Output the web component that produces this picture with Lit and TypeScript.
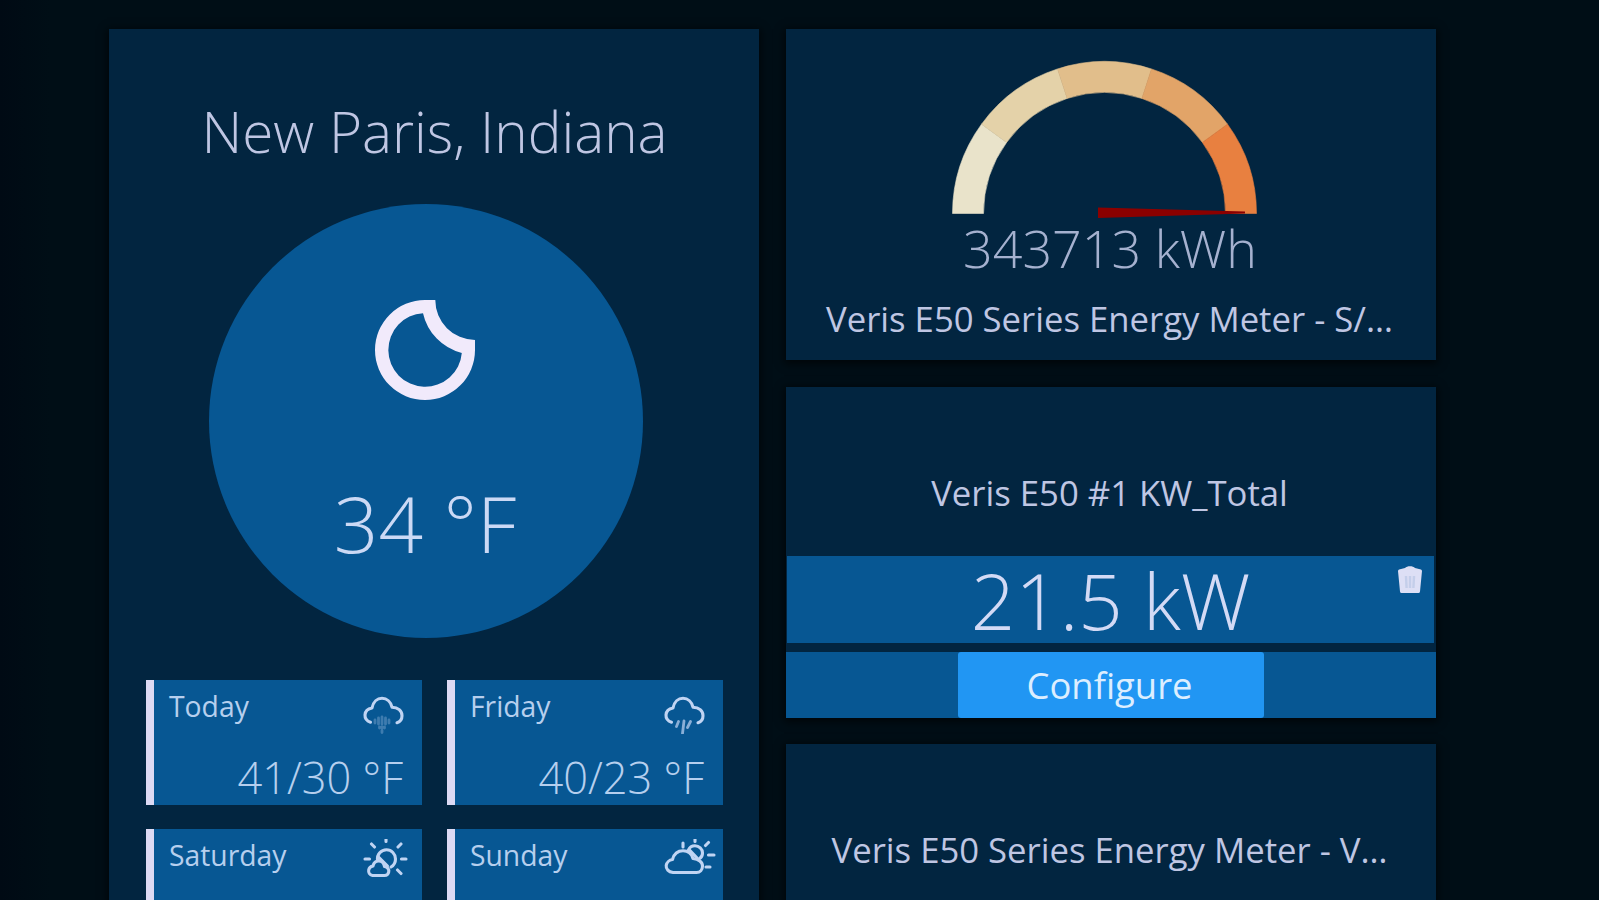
import { LitElement, html, css, svg } from 'lit';
import { customElement, property } from 'lit/decorators.js';

const CLOUD = svg`<path d="M20.500 42.200C17 41 14.800 38.500 15 34.800C15.300 31 18.500 28.600 22 28C23.200 22 27.200 18.300 32 18.300C37 18.300 40.800 22 42 27.200C48 27.200 52 31 52 35.700C52 39.200 50 41.800 47 42.700" />`;

const ICONS: Record<string, unknown> = {
  drizzle: svg`
    ${CLOUD}
    <g class="faint">
      <path d="M25 40v3M28.500 38v6M32 37v7M35.500 38v6M39 40v3M29.500 47v1M32 47v1M34.500 47v1M32 50.500v2" />
    </g>`,
  rain: svg`
    ${CLOUD}
    <g class="soft">
      <path d="M27.500 41.500l-2 5M33 41l-1.500 12.500M39.500 41.500l-3 6" />
    </g>`,
  mostlySunny: svg`
    <path d="M36 12.500v4M21.500 19l3 3M51 19l-3 3M15 34h4.500M51.500 34h4.500M47.500 45l3.500 3.500" />
    <path d="M27.500 35C27 29.500 31 24.800 36.500 24.800C41.500 24.800 45.500 29 45.500 34C45.500 37.500 43.500 40.500 41 42" />
    <path d="M22.500 50.500C19.500 50 18.300 47.500 18.700 45C19.100 42.500 21 41.300 23 41C23.500 37.800 26 35.900 28.700 35.900C32 35.900 34 38.300 34.500 41.500C37.800 42 39.200 44.500 38.700 47C38.300 49.300 36.500 50.500 34.500 50.500Z" />
    <path d="M28 31.500L37.500 41" />`,
  partlyCloudy: svg`
    <path d="M44 12.500v4M57.500 17.500l-3 3M57.500 30h5.500M55 42h4M32 18v4" />
    <path d="M37.500 25C38.500 22.500 41 20.800 44 20.800C48 20.800 51.500 24 51.500 28C51.500 30.200 50.600 32 49 33.300" />
    <path d="M22 47.500C17.500 47 14.800 44 15.200 40.500C15.500 37.500 18.500 35 21.500 34.500C23 29 27 25.800 32 25.800C37 25.800 40.700 28.800 42 33.500C47.500 34 51.500 37 51.500 41C51.500 44.800 49 47.500 45.500 47.500Z" />
    <path d="M38 24.500L47.500 34.500" />`,
};

@customElement('forecast-tile')
class ForecastTile extends LitElement {
  @property() day = '';
  @property() temp = '';
  @property() icon = 'rain';

  static styles = css`
    :host {
      display: block;
      box-sizing: border-box;
      height: 125px;
      border-left: 8px solid #dcdaf4;
      background: #075793;
      color: #b6cfee;
    }

    .top {
      display: flex;
      justify-content: space-between;
      align-items: flex-start;
      height: 69px;
      padding: 5px 4px 0 15px;
      box-sizing: border-box;
    }

    .day {
      font-size: 28.3px;
      line-height: 42px;
    }

    .icon {
      width: 56px;
      height: 44px;
      margin-top: 5px;
      fill: none;
      stroke: #c0d4f3;
      stroke-width: 3.1;
      stroke-linecap: round;
      stroke-linejoin: round;
    }

    .faint {
      opacity: 0.3;
      stroke-width: 2.8;
    }

    .soft {
      opacity: 0.7;
      stroke-width: 2.8;
    }

    .temp {
      padding-right: 19px;
      text-align: right;
      font-size: 43.4px;
      font-weight: 300;
      line-height: 57px;
    }
  `;

  render() {
    const top = this.icon === 'drizzle' || this.icon === 'rain' ? 10 : 14;
    return html`
      <div class="top">
        <span class="day">${this.day}</span>
        <svg class="icon" viewBox="12 ${top} 56 44">${ICONS[this.icon]}</svg>
      </div>
      <div class="temp">${this.temp}</div>
    `;
  }
}

@customElement('energy-gauge')
class EnergyGauge extends LitElement {
  static styles = css`
    :host {
      display: block;
      height: 164px;
    }

    svg {
      display: block;
      margin: 0 auto;
    }

    .needle {
      fill: #8b0000;
    }
  `;

  colors = ['#e9e3ca', '#e4d2a9', '#e1be8b', '#e2a468', '#e88040'];

  _segment(color: string, i: number) {
    const cx = 153.5;
    const cy = 158.5;
    const point = (r: number, step: number) => {
      const a = Math.PI - (step * Math.PI) / this.colors.length;
      return `${(cx + r * Math.cos(a)).toFixed(2)} ${(cy - r * Math.sin(a)).toFixed(2)}`;
    };
    const d = `M${point(152, i)}A152 152 0 0 1 ${point(152, i + 1)}L${point(121, i + 1)}A121 121 0 0 0 ${point(121, i)}Z`;
    return svg`<path d=${d} fill=${color} stroke=${color} stroke-width="0.6" />`;
  }

  render() {
    return html`
      <svg width="320" height="164" viewBox="0 0 320 164">
        ${this.colors.map((c, i) => this._segment(c, i))}
        <path class="needle" d="M147 152.500L294 156.500V158.500L147 163Z" />
      </svg>
    `;
  }
}

@customElement('app-root')
class AppRoot extends LitElement {
  static styles = css`
    :host {
      display: block;
      height: 900px;
      overflow: hidden;
      box-sizing: border-box;
      padding: 29px 163px 0 109px;
      background: linear-gradient(90deg, #000a14 0, #000e16 50px, #000e16 100%);
      font-family: 'Open Sans', 'Noto Sans', sans-serif;
      color: #bfc6e3;
    }

    .board {
      display: grid;
      grid-template-columns: 650px 650px;
      column-gap: 27px;
    }

    .card {
      background: #022540;
      box-shadow: 0 2px 8px 2px rgba(0, 0, 0, 0.6);
    }

    .weather {
      height: 960px;
      box-sizing: border-box;
      padding: 63px 36px 0 37px;
    }

    .place {
      margin: 0;
      text-align: center;
      font-size: 56.6px;
      font-weight: 300;
      line-height: 80px;
      white-space: nowrap;
    }

    .current {
      display: flex;
      flex-direction: column;
      align-items: center;
      width: 434px;
      height: 434px;
      box-sizing: border-box;
      margin: 32px 0 0 63px;
      padding-top: 81px;
      border-radius: 50%;
      background: #075793;
    }

    .moon {
      width: 130px;
      height: 130px;
      margin-right: 2px;
      fill: #f1eafb;
      fill-rule: evenodd;
    }

    .now {
      margin: 58px 2px 0 0;
      font-size: 78.2px;
      font-weight: 300;
      line-height: 100px;
      color: #cbd9f5;
    }

    .forecast {
      display: grid;
      grid-template-columns: 276px 276px;
      gap: 24px 25px;
      margin-top: 42px;
    }

    .points {
      display: flex;
      flex-direction: column;
      gap: 26.5px;
    }

    .point {
      height: 331px;
      text-align: center;
      white-space: nowrap;
    }

    .gauge {
      box-sizing: border-box;
      padding-top: 26px;
    }

    .reading {
      margin-top: -1px;
      padding-right: 2px;
      font-size: 52px;
      font-weight: 300;
      line-height: 60px;
      color: #a5b1cf;
    }

    .label {
      padding-right: 3px;
      font-size: 34.7px;
      line-height: 50px;
    }

    .gauge .label {
      margin-top: 16px;
    }

    .title {
      height: 169px;
      box-sizing: border-box;
      padding-top: 81px;
    }

    .value {
      position: relative;
      height: 87px;
      margin: 0 2px 0 1px;
      background: #075793;
      font-size: 78px;
      font-weight: 300;
      line-height: 88px;
      color: #d3daf5;
    }

    .trash {
      position: absolute;
      top: 9px;
      right: 11px;
      width: 26px;
      height: 29px;
    }

    .actions {
      display: flex;
      justify-content: center;
      height: 66px;
      margin-top: 9px;
      background: #075793;
    }

    .configure {
      width: 306px;
      padding: 0 3px 0 0;
      border: 0;
      border-radius: 3px;
      background: #2196f3;
      color: #dceeff;
      font: inherit;
      font-size: 36.4px;
    }
  `;

  days = [
    { day: 'Today', temp: '41/30 °F', icon: 'drizzle' },
    { day: 'Friday', temp: '40/23 °F', icon: 'rain' },
    { day: 'Saturday', temp: '', icon: 'mostlySunny' },
    { day: 'Sunday', temp: '', icon: 'partlyCloudy' },
  ];

  _renderTrash() {
    return html`
      <svg class="trash" viewBox="0 0 26 29">
        <path fill="#dddff5" d="M8 3C10 .8 16 .8 18 3L24 4.500Q25 5 25 6L23 26.500Q22.800 28 21.500 28H4.500Q3.200 28 3 26.500L1 6Q1 5 2 4.500Z" />
        <path stroke="#b4c4e3" stroke-width="2.4" opacity="0.6" d="M9 11l.6 12M13 11v12M17 11l-.6 12" />
      </svg>`;
  }

  render() {
    return html`
      <main class="board">
        <section class="card weather">
          <h1 class="place">New Paris, Indiana</h1>
          <div class="current">
            <svg class="moon" viewBox="0 0 130 130">
              <path
                d="M75.300 15H65A50 50 0 1 0 115 65V55A40 40 0 0 1 75.300 15ZM63 28.200A36.800 36.800 0 1 0 101.800 68A53 53 0 0 1 63 28.200Z"
              />
            </svg>
            <div class="now">34 °F</div>
          </div>
          <div class="forecast">
            ${this.days.map(
              (d) => html`<forecast-tile day=${d.day} temp=${d.temp} icon=${d.icon}></forecast-tile>`
            )}
          </div>
        </section>

        <div class="points">
          <section class="card point gauge">
            <energy-gauge></energy-gauge>
            <div class="reading">343713 kWh</div>
            <div class="label">Veris E50 Series Energy Meter - S/…</div>
          </section>

          <section class="card point">
            <div class="label title">Veris E50 #1 KW_Total</div>
            <div class="value">21.5 kW ${this._renderTrash()}</div>
            <div class="actions"><button class="configure">Configure</button></div>
          </section>

          <section class="card point">
            <div class="label title">Veris E50 Series Energy Meter - V…</div>
          </section>
        </div>
      </main>
    `;
  }
}
